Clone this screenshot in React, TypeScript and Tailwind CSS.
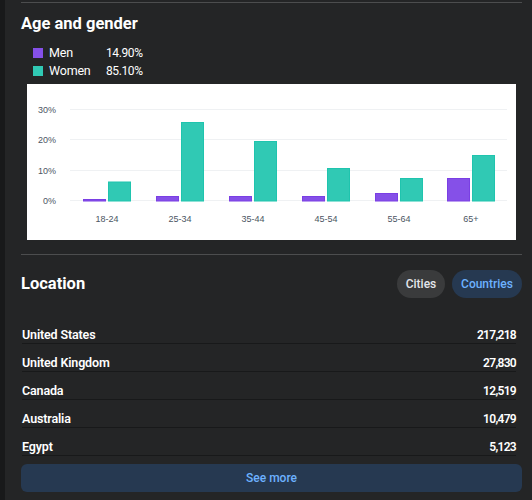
import React from "react";

const bars = [
  { label: "18-24", x: 83, men: 199.5, women: 182 },
  { label: "25-34", x: 156, men: 196.5, women: 122.5 },
  { label: "35-44", x: 229, men: 196.5, women: 141.5 },
  { label: "45-54", x: 302, men: 196.5, women: 168.5 },
  { label: "55-64", x: 375, men: 193.5, women: 178.5 },
  { label: "65+", x: 447, men: 178.5, women: 155.5 },
];

const ticks = [
  { label: "30%", y: 109.5 },
  { label: "20%", y: 139.5 },
  { label: "10%", y: 170.5 },
  { label: "0%", y: 200.5 },
];

const rows = [
  ["United States", "217,218"],
  ["United Kingdom", "27,830"],
  ["Canada", "12,519"],
  ["Australia", "10,479"],
  ["Egypt", "5,123"],
];

function Chart() {
  // coordinates are page coordinates, the viewBox starts at the chart's origin (27, 84)
  return (
    <svg width="489" height="156" viewBox="27 84 489 156" className="block bg-white">
      {ticks.map((t) => (
        <g key={t.label}>
          <line x1="70" x2="507" y1={t.y} y2={t.y} stroke="#eff1f3" strokeWidth="1" />
          <text
            x="56"
            y={t.y + 3.5}
            textAnchor="end"
            fontSize="9"
            fontFamily="'Liberation Sans', sans-serif"
            fill="#4b5563"
          >
            {t.label}
          </text>
        </g>
      ))}
      {bars.map((b) => (
        <g key={b.label}>
          <rect
            x={b.x + 0.5}
            y={b.men}
            width="22"
            height={201 - b.men}
            fill="#8550e8"
            stroke="#7a3fe4"
            strokeWidth="1"
          />
          <rect
            x={b.x + 25.5}
            y={b.women}
            width="22"
            height={201 - b.women}
            fill="#30c9b4"
            stroke="#1fc4ae"
            strokeWidth="1"
          />
          <text
            x={b.x + 24}
            y="222"
            textAnchor="middle"
            fontSize="9"
            fontFamily="'Liberation Sans', sans-serif"
            fill="#4b5563"
          >
            {b.label}
          </text>
        </g>
      ))}
    </svg>
  );
}

export default function App() {
  return (
    <div className="h-[500px] w-[532px] overflow-hidden bg-[#18191a] pl-[5px] font-['Roboto','Noto_Sans',sans-serif]">
      <div className="h-full bg-[#242526] pl-4 pr-[10px] pt-[2px]">
        <div className="h-px bg-[#4c4d4e]" />

        <h2 className="mt-[10px] text-[16.5px] leading-[22px] font-bold text-white">Age and gender</h2>

        <div className="mt-[10px] ml-3 flex flex-col gap-[2px] text-[12.5px] leading-4 tracking-[-0.2px] text-white">
          <div className="flex items-center">
            <span className="h-[10px] w-[10px] bg-[#8550e8]" />
            <span className="ml-[6px] w-[57px]">Men</span>
            <span className="text-[12px] tracking-[-0.4px]">14.90%</span>
          </div>
          <div className="flex items-center">
            <span className="h-[10px] w-[10px] bg-[#30c9b4]" />
            <span className="ml-[6px] w-[57px]">Women</span>
            <span className="text-[12px] tracking-[-0.4px]">85.10%</span>
          </div>
        </div>

        <div className="mt-[5px] ml-[6px]">
          <Chart />
        </div>

        <div className="mt-[14px] h-px bg-[#4c4d4e]" />

        <div className="mt-[15px] flex items-center justify-between">
          <h2 className="text-[16.5px] font-bold text-white">Location</h2>
          <div className="flex gap-[7px] text-[12px] font-medium">
            <span className="flex h-7 w-12 items-center justify-center rounded-full bg-[#3a3b3c] text-[#e4e6eb]">Cities</span>
            <span className="flex h-7 w-[70px] items-center justify-center rounded-full bg-[#263951] text-[#6db1ff]">Countries</span>
          </div>
        </div>

        <div className="mt-[18px] pl-[1px] pr-[6px]">
          {rows.map(([name, value]) => (
            <div
              key={name}
              className="flex h-[28px] items-center justify-between border-b border-[#18191a] pt-[10px] text-[12.5px] leading-4 font-semibold tracking-[-0.15px] text-white"
            >
              <span>{name}</span>
              <span className="text-[12px] tracking-[-0.7px]">{value}</span>
            </div>
          ))}
        </div>

        <button className="mt-[8px] flex h-7 w-full items-center justify-center rounded-md bg-[#263951] text-[12px] font-medium text-[#6db1ff]">
          See more
        </button>
      </div>
    </div>
  );
}
